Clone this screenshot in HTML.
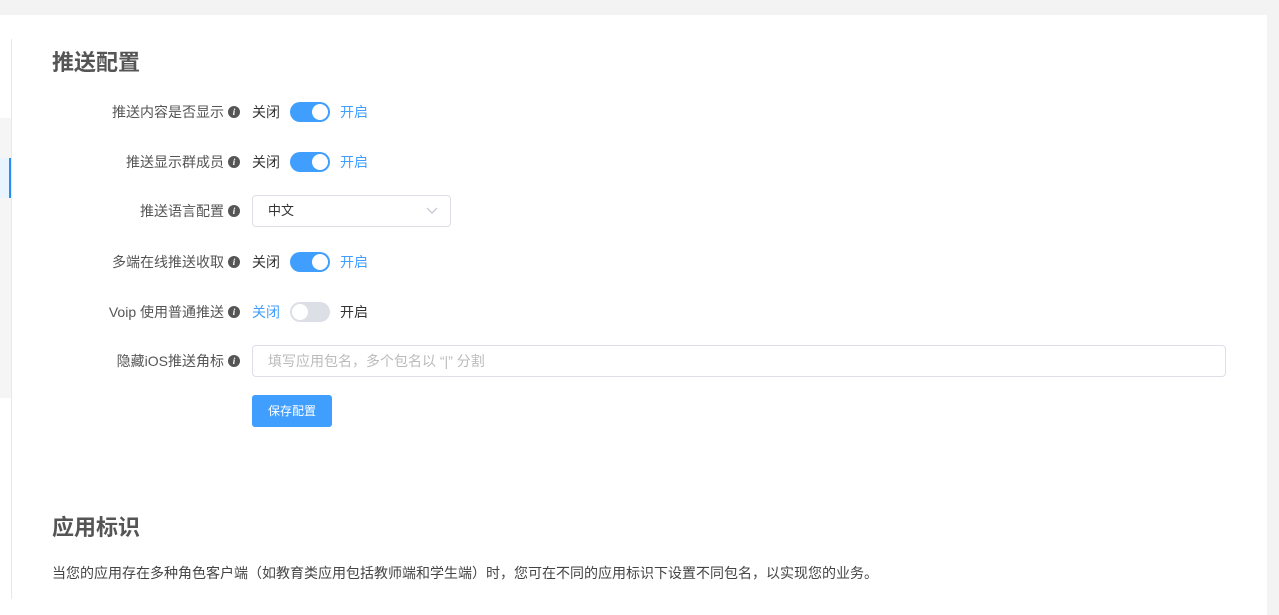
<!DOCTYPE html>
<html><head><meta charset="utf-8"><style>
*{margin:0;padding:0;box-sizing:border-box}
body{width:1279px;height:598px;overflow:hidden;background:#f3f3f3;font-family:"Liberation Sans","Noto Sans CJK SC",sans-serif;font-size:14px;color:#333;position:relative}
.card{position:absolute;left:0;top:15px;width:1267px;height:600px;background:#fff}
.vline{position:absolute;left:11px;top:39px;width:1px;height:560px;background:#e8e8e8}
.sb{position:absolute;left:0;top:118px;width:11px;height:280px;background:#f5f5f5}
.sba{position:absolute;left:0;top:158px;width:11px;height:40px;background:#e8f4ff;border-right:2px solid #2d8cf0}
h2{position:absolute;left:52px;font-size:22px;font-weight:bold;color:#555}
.row{position:absolute;left:0;height:20px;display:flex;align-items:center}
.lab{position:absolute;right:1039px;white-space:nowrap;color:#555;display:flex;align-items:center}
.i{display:inline-block;width:12px;height:12px;border-radius:50%;background:#555;color:#fff;font-size:9px;font-style:italic;font-weight:bold;text-align:center;line-height:12px;margin-left:4px;font-family:"Liberation Serif",serif}
.ctl{position:absolute;left:252px;display:flex;align-items:center;white-space:nowrap}
.sw{width:40px;height:20px;border-radius:10px;background:#409eff;position:relative;margin:0 10px 0 10px}
.sw::after{content:"";position:absolute;top:2px;left:22px;width:16px;height:16px;border-radius:50%;background:#fff}
.sw.off{background:#dcdfe6}.sw.off::after{left:2px}
.b{color:#409eff}
.sel{position:absolute;left:252px;width:199px;height:32px;border:1px solid #dcdfe6;border-radius:4px;padding-left:15px;line-height:30px;font-size:13px}
.inp{position:absolute;left:252px;width:974px;height:32px;border:1px solid #dcdfe6;border-radius:4px;padding-left:15px;line-height:30px;color:#bbb}
.btn{position:absolute;left:252px;top:395px;width:80px;height:32px;background:#409eff;border-radius:3px;color:#fff;font-size:12px;text-align:center;line-height:32px}
</style></head><body>
<div class="card"></div><div class="vline"></div><div class="sb"></div><div class="sba"></div>
<h2 style="top:45px">推送配置</h2>
<div class="row" style="top:102px;width:100%"><span class="lab">推送内容是否显示<span class="i">i</span></span><span class="ctl">关闭<span class="sw"></span><span class="b">开启</span></span></div>
<div class="row" style="top:152px;width:100%"><span class="lab">推送显示群成员<span class="i">i</span></span><span class="ctl">关闭<span class="sw"></span><span class="b">开启</span></span></div>
<div class="row" style="top:201px;width:100%"><span class="lab">推送语言配置<span class="i">i</span></span></div>
<div class="sel" style="top:195px">中文<svg style="position:absolute;right:12px;top:11px" width="12" height="8" viewBox="0 0 12 8"><path d="M1 1l5 5 5-5" fill="none" stroke="#c0c4cc" stroke-width="1.2"/></svg></div>
<div class="row" style="top:252px;width:100%"><span class="lab">多端在线推送收取<span class="i">i</span></span><span class="ctl">关闭<span class="sw"></span><span class="b">开启</span></span></div>
<div class="row" style="top:302px;width:100%"><span class="lab">Voip 使用普通推送<span class="i">i</span></span><span class="ctl"><span class="b">关闭</span><span class="sw off"></span>开启</span></div>
<div class="row" style="top:351px;width:100%"><span class="lab">隐藏iOS推送角标<span class="i">i</span></span></div>
<div class="inp" style="top:345px">填写应用包名，多个包名以 “|” 分割</div>
<div class="btn">保存配置</div>
<h2 style="top:510px">应用标识</h2>
<div style="position:absolute;left:52px;top:563px;color:#444;white-space:nowrap">当您的应用存在多种角色客户端（如教育类应用包括教师端和学生端）时，您可在不同的应用标识下设置不同包名，以实现您的业务。</div>
</body></html>
